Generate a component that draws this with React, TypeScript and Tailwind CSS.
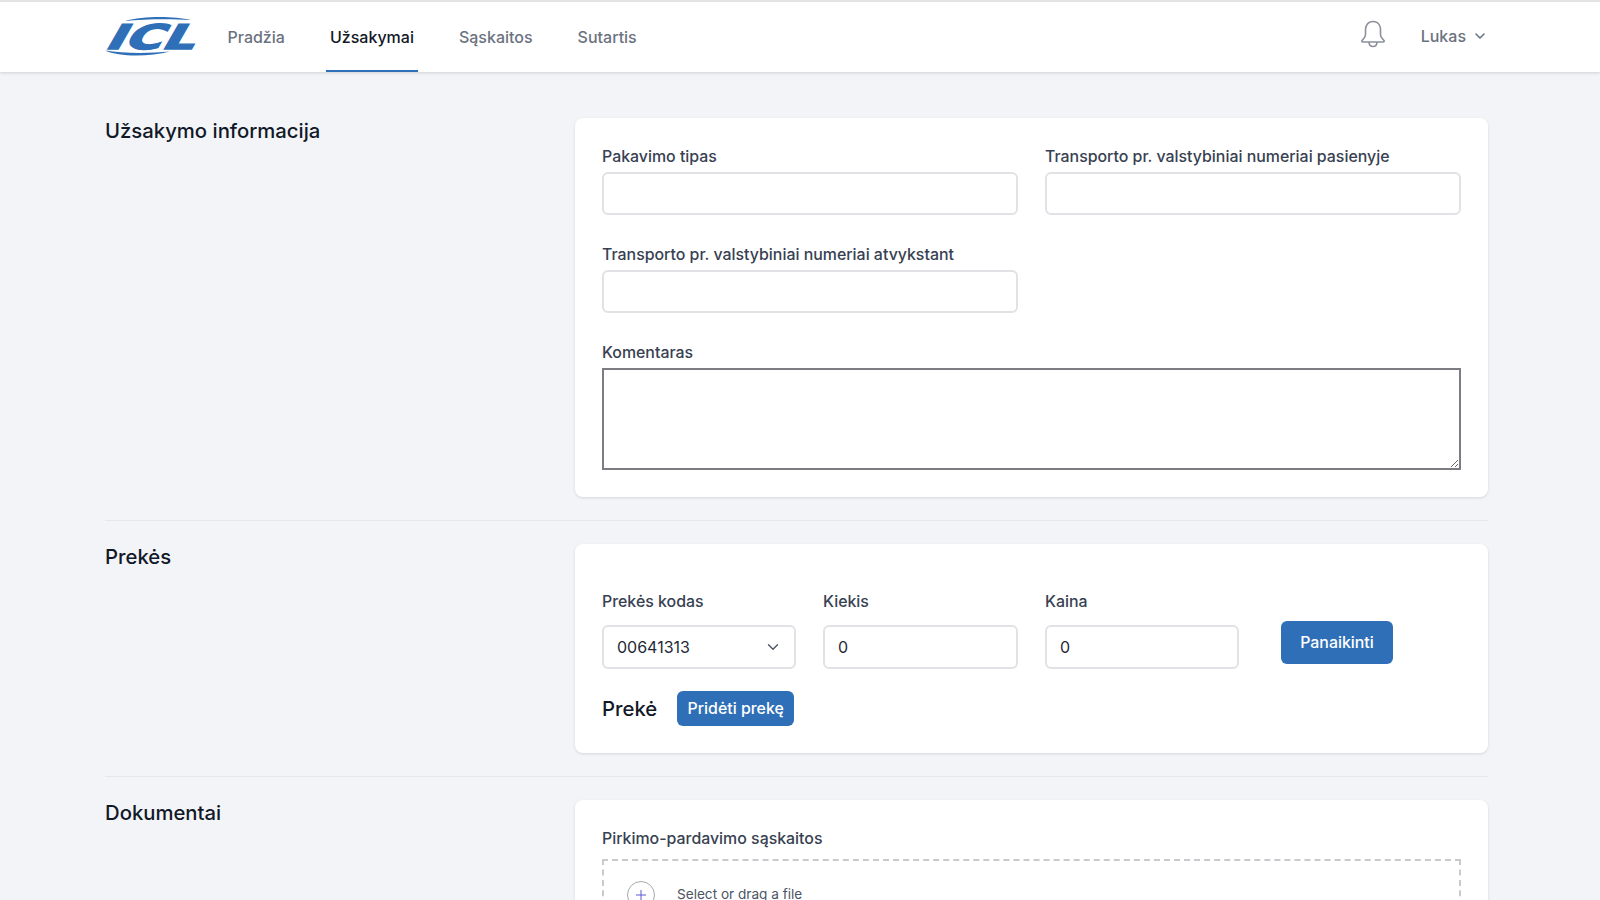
import { FC, ReactNode } from "react"

import { ChevronDown, Plus } from "lucide-react"

const Logo: FC = () => (
	<svg width="92" height="42" viewBox="0 0 92 42" className="block overflow-visible">
		<path d="M20 5 C38 0 68 0 86 4 C66 3 40 3 20 5 Z" fill="#2f6fb8" />
		<path d="M0 34.5 C18 37.5 44 37.5 65 35.5 C44 41 14 41 0 34.5 Z" fill="#2f6fb8" />
		<g transform="translate(-1.5 32.5) skewX(-30) scale(1.5 1)">
			<text
				x="0"
				y="0"
				fontFamily="DejaVu Sans, sans-serif"
				fontWeight="700"
				fontSize="34"
				fill="#2f6fb8"
				stroke="#2f6fb8"
				strokeWidth="1.4"
			>
				ICL
			</text>
		</g>
	</svg>
)

const Bell: FC = () => (
	<svg width="26" height="28" viewBox="0 0 26 28" fill="none" stroke="#8b909a" strokeWidth="1.6" className="mb-[4px] block">
		<path d="M13 1.5 C7.5 1.5 5.5 6 5.5 10 V14.5 C5.5 17 4 18.5 2 20.5 C1.4 21.3 2 22 3 22 H23 C24 22 24.6 21.3 24 20.5 C22 18.5 20.5 17 20.5 14.5 V10 C20.5 6 18.5 1.5 13 1.5 Z" />
		<path d="M9 22 C9 24.8 10.8 26.5 13 26.5 C15.2 26.5 17 24.8 17 22" />
	</svg>
)

const labelClass = "text-[15.9px] leading-[19px] font-medium text-[#374151]"

const Field: FC<{ label: string; value?: string; className?: string; gap?: string; tall?: boolean }> = ({
	label,
	value,
	className,
	gap,
	tall,
}) => (
	<label className={`flex flex-col ${className ?? ""}`}>
		<span className={`${gap ?? "mb-[6px]"} ${labelClass}`}>{label}</span>
		<span
			className={`flex ${tall ? "h-[44px]" : "h-[43px]"} items-center rounded-md border-2 border-[#e1e2e5] bg-white px-[13px] text-[16px] text-[#1f2937]`}
		>
			{value}
		</span>
	</label>
)

const Section: FC<{ title: string; children: ReactNode }> = ({ title, children }) => (
	<section className="flex">
		<h2 className="w-[470px] pt-[1px] text-[20.3px] leading-[24px] font-medium text-[#111827]">{title}</h2>
		<div className="w-[913px] rounded-lg bg-white px-[27px] shadow-[0_1px_3px_rgba(0,0,0,0.12)]">{children}</div>
	</section>
)

const navItems = ["Pradžia", "Užsakymai", "Sąskaitos", "Sutartis"]

export default function App() {
	return (
		<div className="h-screen overflow-hidden bg-[#f3f4f8] font-['Inter',sans-serif]">
			<header className="flex h-[72px] items-center border-t-2 border-[#e3e3e3] bg-white pr-[112px] pl-[105px] shadow-[0_1px_3px_rgba(0,0,0,0.15)]">
				<Logo />
				<nav className="ml-[26.5px] flex h-full gap-[37px]">
					{navItems.map((item) => (
						<a
							key={item}
							className={
								item === "Užsakymai"
									? "flex items-center border-b-2 border-[#2f6fb8] px-[4px] pt-[2px] text-[16px] font-medium text-[#111827]"
									: "flex items-center border-b-2 border-transparent px-[4px] pt-[2px] text-[16px] font-medium text-[#6b7280]"
							}
						>
							{item}
						</a>
					))}
				</nav>
				<div className="mb-[2px] ml-auto flex items-center">
					<Bell />
					<span className="ml-[35px] text-[16px] font-medium text-[#6b7280]">Lukas</span>
					<ChevronDown size={16} strokeWidth={2.4} className="ml-[6px] text-[#6b7280]" />
				</div>
			</header>

			<main className="pt-[46px] pr-[112px] pl-[105px]">
				<Section title="Užsakymo informacija">
					<div className="pt-[29px] pb-[27px]">
						<div className="grid grid-cols-2 gap-x-[27px] gap-y-[30px]">
							<Field label="Pakavimo tipas" />
							<Field label="Transporto pr. valstybiniai numeriai pasienyje" />
							<Field label="Transporto pr. valstybiniai numeriai atvykstant" />
						</div>
						<label className="mt-[30px] flex flex-col">
							<span className={`mb-[6px] ${labelClass}`}>Komentaras</span>
							<textarea className="block h-[102px] w-full border-2 border-[#7c7c82] bg-white" />
						</label>
					</div>
				</Section>

				<div className="my-[23px] border-t border-[#e5e7eb]" />

				<Section title="Prekės">
					<div className="pt-[48px] pb-[27px]">
						<div className="flex items-start">
							<label className="flex w-[194px] flex-col">
								<span className={`mb-[14px] ${labelClass}`}>Prekės kodas</span>
								<span className="flex h-[44px] items-center justify-between rounded-md border-2 border-[#e1e2e5] bg-white pr-[12px] pl-[13px] text-[16px] text-[#1f2937]">
									00641313
									<ChevronDown size={18} strokeWidth={1.8} className="text-[#4b5563]" />
								</span>
							</label>
							<Field label="Kiekis" value="0" gap="mb-[14px]" tall className="ml-[27px] w-[195px]" />
							<Field label="Kaina" value="0" gap="mb-[14px]" tall className="ml-[27px] w-[194px]" />
							<button className="mt-[29px] ml-[42px] h-[43px] w-[112px] rounded-md bg-[#2f6fb8] text-[15.9px] font-medium text-white">
								Panaikinti
							</button>
						</div>
						<div className="mt-[22px] flex items-center">
							<h3 className="text-[20.3px] leading-[24px] font-medium text-[#111827]">Prekė</h3>
							<button className="ml-[20px] h-[35px] w-[117px] rounded-md bg-[#2f6fb8] text-[15.9px] font-medium text-white">
								Pridėti prekę
							</button>
						</div>
					</div>
				</Section>

				<div className="my-[23px] border-t border-[#e5e7eb]" />

				<Section title="Dokumentai">
					<div className="pt-[29px] pb-[27px]">
						<span className={`mb-[11px] block ${labelClass}`}>Pirkimo-pardavimo sąskaitos</span>
						<div className="flex h-[100px] items-start border-2 border-dashed border-[#c9cacd] pt-[20px] pl-[23px]">
							<span className="flex h-[28px] w-[28px] items-center justify-center rounded-full border border-[#a8a9ad]">
								<Plus size={16} strokeWidth={1.5} className="text-[#5b5bd6]" />
							</span>
							<span className="mt-[5px] ml-[22px] text-[13.6px] leading-[16px] text-[#4b5563]">Select or drag a file</span>
						</div>
					</div>
				</Section>
			</main>
		</div>
	)
}
